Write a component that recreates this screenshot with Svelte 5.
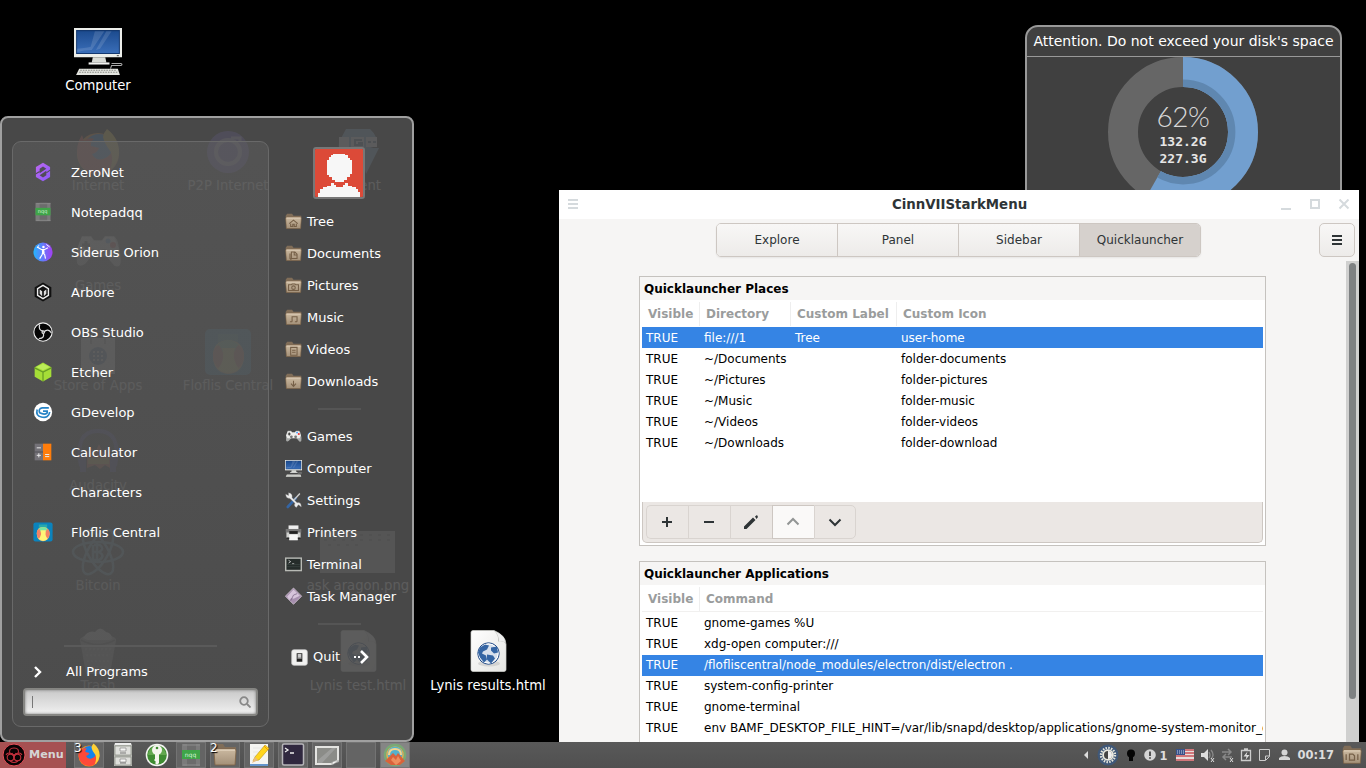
<script>
  const art = {
    computer: `<path d="M2 2h46v28H2z" fill="#eceeea"/><path d="M4 4h42v23H4z" fill="#13386f"/><path d="M5 5h40v21H5z" fill="url(#screen)"/><path d="M22 5h9L19 23q-7 0-14 2v-3q10-1 13-2zM33 5h5L27 22l-4 1z" fill="#fff" opacity=".13"/><path d="M43 28.500h2" stroke="#555"/><path d="M20 30h12l1 5h-14z" fill="#d9dbd6"/><path d="M16 35h20v2H16z" fill="#f4f4f2"/><path d="M38 36h9q2 1 0 2H38l-1 3" fill="none" stroke="#aaa"/><path d="M7 41h37l2 6H4z" fill="#e3e4df"/><path d="M8 42.500h34M7 44.500h37" stroke="#888a85" stroke-dasharray="1.500 1"/>`,
    firefox: `<circle cx="24" cy="26" r="21" fill="#ff8a16"/><circle cx="25" cy="22" r="16" fill="#1583ec"/><path d="M4 30Q1 17 8 7l2 6q4-4 10-2-4 3-3 7l8 2q-2 5-7 6 3 7 11 5 10-3 10-15Q44 23 44 28q-2 17-20 18Q8 45 4 30z" fill="#ff4939"/><path d="M33 1q13 10 12 25-2 12-10 17 5-9 2-19-7-9-8-15 1-5 4-8z" fill="#ffd035"/>`,
    p2p: `<circle cx="24" cy="24" r="21" fill="#6147d8"/><circle cx="24" cy="24" r="12" fill="none" stroke="#c9bfff" stroke-width="4"/><path d="M27 10h9v4" stroke="#c9bfff" stroke-width="3" fill="none"/>`,
    torrent: `<path d="M12 1h24q8 7 7 17l-7 2h9L32 46l-3-13Q2 32 5 14z" fill="#6ca3d8"/><path d="M5 9h10v10H5zM17 9h13v10H17zM32 9h11v10H32z" fill="#eef"/><path d="M28 12h-7v5h7v-2h-4M34 14h3m2 0h3" stroke="#468" stroke-width="2" fill="none"/>`,
    gamepad: `<path d="M8 8h9l3 4h8l3-4h9q4 3 5 12 3 11 1 17-4 4-8-2l-6-7H18l-7 8q-6 4-8-1Q2 28 5 15z" fill="#a8aaa9"/><path d="M8 9h9l3 4h8l3-4h9l5 12-4 8H7l-4-8z" fill="#eeeeec"/><path d="M12 13v8M8 17h8" stroke="#333" stroke-width="3"/><circle cx="18" cy="25" r="4" fill="#777"/><circle cx="30" cy="25" r="4" fill="#777"/><circle cx="34" cy="13" r="2.500" fill="#39f"/><circle cx="39" cy="17" r="3" fill="#e33"/>`,
    store: `<path d="M7 10h34v36H7z" fill="#eee"/><path d="M17 16V7q7-8 14 0v9" fill="none" stroke="#888" stroke-width="2"/><circle cx="24" cy="28" r="9" fill="#3769a8"/><path d="M19 24h12M19 28h12M19 32h12" stroke="#fff" stroke-width="2" stroke-dasharray="2 2"/>`,
    floflis: `<rect x="1" y="1" width="46" height="46" rx="5" fill="#0b83bd"/><path d="M14 6h20v9H14z" fill="#28a8ad"/><path d="M9 28Q9 13 24 12q16 1 16 17-1 16-16 17Q9 44 9 28z" fill="#f8c56c"/><path d="M13 17q11-10 22 0l-5 7H18z" fill="#79e5a1"/><path d="M9 28q0-9 6-11 9 12 0 23-6-4-6-12zM40 28q0-9-6-11-9 12 0 23 6-4 6-12z" fill="#f28266"/><path d="M18 20h13q-4 10 4 21-10 8-21 0 8-10 4-21z" fill="#fff477"/>`,
    audacity: `<path d="M7 38Q0 3 24 3t17 35" fill="none" stroke="#2929aa" stroke-width="4"/><path d="M9 26v18M39 26v18" stroke="#2929aa" stroke-width="6"/><path d="M13 24l4-5 4 6 4-9 4 9 3-5 4 6v14l-5-3-5 4-5-4-8 3z" fill="#ff5526"/><path d="M14 30h21v6H14z" fill="#ffcc26"/>`,
    bitcoin: `<g fill="none" stroke="#54a6cf" stroke-width="2.500"><ellipse cx="24" cy="24" rx="25" ry="10"/><ellipse cx="24" cy="24" rx="25" ry="10" transform="rotate(60 24 24)"/><ellipse cx="24" cy="24" rx="25" ry="10" transform="rotate(120 24 24)"/><path d="M20 17h6q5 4-1 7 7 4 0 8h-6V17m4-3v20M20 24h5"/></g>`,
    trash: `<ellipse cx="24" cy="12" rx="18" ry="6" fill="#aaa"/><path d="M9 10q5-8 12-6 5-7 11 0 6 1 6 7l-14 5z" fill="#eee"/><path d="M6 12h36l-6 34H12z" fill="#999"/><path d="M7 12q17 9 34 0" stroke="#444" stroke-width="1.500" fill="none"/><path d="M11 21h26M12 27h24M13 33h22M14 39h20" stroke="#ddd" stroke-dasharray="2 2"/>`,
    html: `<g transform="translate(0 1.500)"><path d="M7 3q0-2 2-2h21q12 5 12 14v25q0 2-2 2H9q-2 0-2-2z" fill="url(#paper)" stroke="#d1d2ce" stroke-width=".7"/><path d="M30 1q5 5 4 11 6-1 8 3Q39 5 30 1z" fill="#babdb7"/><path d="M31 2q10 4 10 11-3-2-6-1 0-6-4-10z" fill="#eee"/><ellipse cx="25" cy="34" rx="11" ry="3" fill="#bbb" opacity=".5"/><circle cx="24.500" cy="24" r="10.700" fill="#d7e0ec" stroke="#204a87"/><circle cx="24.500" cy="24" r="9.600" fill="none" stroke="#fff"/><path d="M16 18l5-3 4 1-2 4-4 2-1 2 4 2 1 4-3 3-4-5-2-5zM23 25l6 1 2 3-4 5-4-4zM27 18l6-1 1 6-4 1-3-3z" fill="#3465a4"/></g>`,
    photo: `<path d="M-14 3h75v42h-75z" fill="#a8a8a8"/><path d="M-10 7h67M-10 12h67M-6 17h30" stroke="#777" stroke-width="2" stroke-dasharray="3 6"/>`,
    zeronet: `<path d="M12 1l8.500 5v12L12 23l-8.500-5V6z" fill="url(#zero)"/><path d="M12 5.500l4 2.500-8 5.500V8zM12 18.500L8 16l8-5.500V16z" fill="#514c58"/><path d="M3 14.500l5-3M16 13l5-3.500" stroke="#514c58" stroke-width="1.300"/>`,
    npp: `<path d="M3 1h18v22H3z" fill="#7b7b7b"/><path d="M8 1h9v22H8z" fill="#6c6c6c"/><path d="M4 2h17M4 22h17" stroke="#8c8c8c"/><path d="M3 7h18v9H3z" fill="#3fa548"/><text x="11.500" y="13.500" text-anchor="middle" font-family="DejaVu Sans" font-size="6" fill="#d8f4da">nqq</text>`,
    siderus: `<circle cx="12" cy="12" r="11.500" fill="url(#orion)"/><g fill="none" stroke="#fff"><path d="M5 6l5 3h4l4-2M8 20l3-5 .5-2 2.500 2 1 5" stroke-width="1.400"/><path d="M12 9l.5 5" stroke-width="3"/><path d="M16 3l4 3M7 4L5 7" stroke-width="1.200"/></g><circle cx="12.500" cy="6" r="1.500" fill="#fff"/>`,
    arbore: `<path d="M12 .500l10 5.700v11.500l-10 5.800-10-5.800V6.200z" fill="#111"/><path d="M12 4l6.500 4v8L12 20l-6.500-4V8z" fill="none" stroke="#eee" stroke-width="1.700"/><path d="M8 9v5l3 3v-6zM16 9v5l-3 3v-6z" fill="#ddd"/>`,
    obs: `<circle cx="12" cy="12" r="11" fill="#050505" stroke="#eee" stroke-width="1.300"/><g fill="none" stroke="#ddd" stroke-width="1.500"><path d="M12 11Q6 10 8 3M13 12q5-5 9 1M12 13q3 6-5 7"/><circle cx="12.300" cy="12" r="1.500"/></g>`,
    etcher: `<path d="M12 .500l10 5.700v11.500l-10 5.800-10-5.800V6.200z" fill="#a5de37"/><path d="M2 7l10 5 10-5M12 12v11" fill="none" stroke="#669c25" stroke-width="1.500"/><path d="M12 2l8 4-8 4-8-4z" fill="#bced59"/>`,
    gdevelop: `<circle cx="12" cy="12" r="11" fill="#fff"/><path d="M19 7h-8q-5 1-3 6 6 3 9 0v-2h-5M5 9q-2 8 5 9 9 2 10-6" fill="none" stroke="#2683c5" stroke-width="2"/>`,
    calculator: `<path d="M2 2h10v20H2z" fill="#747278"/><path d="M12 2h10v20H12z" fill="#ff7d0b"/><path d="M4.500 7h5M4.500 16h5M7 13.500v5M14.500 15h5M14.500 17.500h5" stroke="#e9e9e9" stroke-width="1.200"/><path d="M2 12h10" stroke="#4c4a50"/>`,
    tools: `<path d="M15 9L4 21" stroke="#3465a4" stroke-width="4" stroke-linecap="round"/><path d="M21 2L12 12" stroke="#ccc" stroke-width="2"/><path d="M5 1q6 1 5 7l7 7q6-1 6 6l-4-3-3 4q-4-2-2-6L7 9Q1 9 1 3l4 2z" fill="#eee" stroke="#888" stroke-width=".5"/>`,
    printer: `<path d="M5 2h14v8H5z" fill="#eee"/><path d="M2 8h20v12H2z" fill="#d0d1cf"/><path d="M1 7h22v5H1z" fill="#777"/><path d="M6 10h12v4H6z" fill="#222"/><path d="M6 15h12v7H6z" fill="#f7f7f7"/><path d="M2 20h20" stroke="#222" stroke-width="2"/><path d="M6 17h12v6H6z" fill="#f7f7f7"/>`,
    terminal: `<path d="M0 2h24v20H0z" fill="#b8bab5"/><path d="M2 4h20v15.500H2z" fill="#252c2a"/><path d="M5 6l3 2-3 2m5 1h3" fill="none" stroke="#eee"/><path d="M3 12h18M3 15h18" stroke="#3b4542"/><path d="M0 22h24" stroke="#555"/>`,
    task: `<path d="M12 0l11.500 11.500L12 23 .5 11.500z" fill="#a68fae" stroke="#ddd0df" stroke-width="1"/><path d="M3 12l9-10 9 9-9 4-3-1-3 3z" fill="#d6c4db"/><path d="M8 18l4-8 5-2" stroke="#765f7f" fill="none"/>`,
    quit: `<rect x="1" y="1" width="22" height="22" rx="3" fill="#f1f1f0" stroke="#ccc"/><path d="M8 6h8v12H8z" fill="#222"/><path d="M9 7h6v7H9z" fill="#888"/><path d="M10 7h4v5h-4z" fill="#ccc"/>`,
    cabinet: `<path d="M4 0h16l1 3H3z" fill="#eee"/><path d="M3 2h18v21H3z" fill="#b6b8b2"/><path d="M4 3h16v9H4zM4 14h16v8H4z" fill="#dfe0dc" stroke="#888a83" stroke-width=".7"/><path d="M9 5h6v3H9zM9 16h6v3H9z" fill="#f7f7f6" stroke="#777" stroke-width=".6"/><path d="M9 10h6M9 20h6" stroke="#777"/>`,
    key: `<circle cx="12" cy="12" r="11.300" fill="#f5f5f3"/><circle cx="12" cy="12" r="9.800" fill="#3f8c32"/><path d="M3 12a9 9 0 0 1 18 0z" fill="#63a84f"/><circle cx="12" cy="7" r="5" fill="#f5f5ee"/><circle cx="12" cy="5" r="1.300" fill="#3f8c32"/><path d="M10 10h4v10l-2 2-2-2 1-1-2-2 1-1z" fill="#f5f5ee"/>`,
    folder: `<path d="M1 4l2-3h7l2 3h11v4H1z" fill="#806d58"/><path d="M2 6h20q1 0 1 2l-1 14H2L1 8z" fill="url(#tan)" stroke="#806344" stroke-width=".8"/><path d="M2 7h20" stroke="#efe1cd"/>`,
    notes: `<path d="M3 1h18v21H3z" fill="#f5f5f2"/><path d="M3 21h18v2H3z" fill="#6495cc"/><path d="M6 5h10M6 9h10M6 13h8" stroke="#ddd" stroke-width=".6"/><path d="M6 18l2-4L18 2l4 3.500L12 17z" fill="#ffd51d" stroke="#bd960b" stroke-width=".6"/><path d="M8 14l3 3-6 3z" fill="#e7bc80"/><path d="M17 3l4 4" stroke="#f39b00"/>`,
    console: `<rect x="1.500" y="1" width="21" height="21" rx="1.500" fill="#30283f" stroke="#b6b5b9" stroke-width="1.500"/><path d="M4 5l3 2-3 2m5 1h4" stroke="#eee" fill="none" stroke-width="1.300"/>`,
    viewer: `<path d="M0 3h24v16q-6 1-7 3H0z" fill="#e4e4e1"/><path d="M2 5h20v12l-6 3H2z" fill="#8b8c88"/><path d="M3 17L17 5h4L7 20H3z" fill="#aaa" opacity=".6"/><path d="M17 22q-1-5 7-4z" fill="#f1f1ef" stroke="#888" stroke-width=".6"/>`,
    ember: `<circle cx="12" cy="12" r="10" fill="#e9ad4e" stroke="#79a975" stroke-width="2.500"/><circle cx="12" cy="11" r="7.500" fill="#54b2cc"/><path d="M6 12q0-6 6-6t6 6" fill="none" stroke="#f4d48e" stroke-width="2"/><path d="M2 18L10 10l3 3 2-3 7 8-5 4H8z" fill="#d9623b"/><path d="M8 17l2-3 3 3 2-4 3 5-5 4z" fill="#ee8f5e"/>`
  };
  const desktop = [
    ['Computer', 'computer', 0, 0], ['Internet', 'firefox', 0, 1], ['P2P Internet', 'p2p', 1, 1], ['Torrent', 'torrent', 2, 1],
    ['Games', 'gamepad', 0, 2], ['Store of Apps', 'store', 0, 3], ['Floflis Central', 'floflis', 1, 3], ['Audacity', 'audacity', 0, 4],
    ['Bitcoin', 'bitcoin', 0, 5], ['ask aragon.png', 'photo', 2, 5], ['Trash', 'trash', 0, 6], ['Lynis test.html', 'html', 2, 6], ['Lynis results.html', 'html', 3, 6]
  ];
  const apps = [['ZeroNet', 'zeronet'], ['Notepadqq', 'npp'], ['Siderus Orion', 'siderus'], ['Arbore', 'arbore'], ['OBS Studio', 'obs'], ['Etcher', 'etcher'], ['GDevelop', 'gdevelop'], ['Calculator', 'calculator'], ['Characters', ''], ['Floflis Central', 'floflis']];
  const marks = {
    Tree: 'M6 15l6-5 6 5M8 15v4h3v-3h2v3h3v-4', Documents: 'M9 10h5l3 3v6H9zM7 12v7l2 2M13 10v4h4',
    Pictures: 'M5 11h4l1-1h4l1 1h4v8H5zM14.500 15a2.500 2.500 0 1 1-5 0 2.500 2.500 0 1 1 5 0', Music: 'M10 18v-7h7v7M7 18h3M14 18h3',
    Videos: 'M8 9h9v11H8zM10 13h5M10 16h5', Downloads: 'M12 11v7M8.500 15l3.500 4 3.500-4'
  };
  const system = [['Games', 'gamepad', 48], ['Computer', 'computer', 46], ['Settings', 'tools', 24], ['Printers', 'printer', 24], ['Terminal', 'terminal', 24], ['Task Manager', 'task', 24]];
  const tasks = [['firefox', 48, '3', 1], ['cabinet', 24, '', 0], ['key', 24, '', 0], ['npp', 24, '', 1], ['folder', 24, '2', 1], ['notes', 24, '', 1], ['console', 24, '', 1], ['viewer', 24, '', 1], ['', 24, '', 1], ['ember', 24, '', 2]];
  const places = [['file:///1', 'Tree', 'user-home'], ['~/Documents', '', 'folder-documents'], ['~/Pictures', '', 'folder-pictures'], ['~/Music', '', 'folder-music'], ['~/Videos', '', 'folder-videos'], ['~/Downloads', '', 'folder-download']];
  const commands = ['gnome-games %U', 'xdg-open computer:///', '/flofliscentral/node_modules/electron/dist/electron .', 'system-config-printer', 'gnome-terminal', 'env BAMF_DESKTOP_FILE_HINT=/var/lib/snapd/desktop/applications/gnome-system-monitor_gnome-system-monitor.desktop'];
</script>

{#snippet icon(name, size, box = 24)}
  {@const origin = name === 'computer' ? 2 : 0}
  <svg class="icon" width={size} height={size} viewBox="{origin} {origin} {box} {box}">{@html art[name] ?? ''}</svg>
{/snippet}

<svg class="defs" width="0" height="0">
  <defs>
    <linearGradient id="screen" x2="0" y2="1"><stop stop-color="#1c4b8f" /><stop offset="1" stop-color="#3a6eb8" /></linearGradient>
    <linearGradient id="paper" x2="1" y2="1"><stop stop-color="#fff" /><stop offset="1" stop-color="#e5e5e2" /></linearGradient>
    <linearGradient id="orion" x2="1" y2="0"><stop stop-color="#25b5ff" /><stop offset="1" stop-color="#a53ef4" /></linearGradient>
    <linearGradient id="zero" x2="1" y2="1"><stop stop-color="#bd68f0" /><stop offset="1" stop-color="#8a5af8" /></linearGradient>
    <linearGradient id="tan" x2="0" y2="1"><stop stop-color="#cbb9a0" /><stop offset="1" stop-color="#a39078" /></linearGradient>
  </defs>
</svg>

<main class="desktop">
  {#each desktop as [label, name, col, row]}
    <div class="shortcut" style="left:{33 + col * 130}px;top:{28 + row * 100}px">
      {@render icon(name, 48, name === 'computer' ? 46 : 48)}
      <span>{label}</span>
    </div>
  {/each}

  <section class="desklet">
    <header>Attention. Do not exceed your disk's space</header>
    <div class="gauge">
      <svg width="150" height="150" viewBox="0 0 150 150">
        <circle cx="75" cy="75" r="60" fill="none" stroke="#666" stroke-width="30" />
        <g fill="none" transform="rotate(-90 75 75)">
          <circle cx="75" cy="75" r="60" stroke="#729fcf" stroke-width="30" pathLength="100" stroke-dasharray="58.200 100" />
          <circle cx="75" cy="75" r="48.700" stroke="#5f87b0" stroke-width="7.400" pathLength="100" stroke-dasharray="58.200 100" />
        </g>
      </svg>
      <div class="reading"><b>62%</b><span>132.2G</span><span>227.3G</span></div>
    </div>
  </section>

  <section class="window">
    <header class="titlebar">
      <svg width="12" height="12" viewBox="0 0 12 12" stroke="#d5dadd" stroke-width="2"><path d="M1 1h10M1 5h10M1 9h10" /></svg>
      <h1>CinnVIIStarkMenu</h1>
      <div class="controls">
        <svg width="12" height="12" viewBox="0 0 12 12"><path d="M1 10h10" /></svg>
        <svg width="12" height="12" viewBox="0 0 12 12"><path d="M2 1h8v8H2z" /></svg>
        <svg width="12" height="12" viewBox="0 0 12 12"><path d="M1.500 .500l9 9m0-9l-9 9" /></svg>
      </div>
    </header>
    <nav>
      <div class="tabs">
        {#each ['Explore', 'Panel', 'Sidebar', 'Quicklauncher'] as tab, i}
          <button class:active={i === 3}>{tab}</button>
        {/each}
      </div>
      <button class="burger" aria-label="Menu"><svg width="12" height="12" viewBox="0 0 12 12" stroke="#2e3436" stroke-width="2"><path d="M1 2h10M1 6h10M1 10h10" /></svg></button>
    </nav>
    <div class="body">
      <div class="content">
        <section class="group first">
          <h2>Quicklauncher Places</h2>
          <div class="table">
            <div class="head places"><span>Visible</span><span>Directory</span><span>Custom Label</span><span>Custom Icon</span></div>
            {#each places as [dir, label, ico], i}
              <div class="row places" class:selected={i === 0}><span>TRUE</span><span>{dir}</span><span>{label}</span><span>{ico}</span></div>
            {/each}
          </div>
          <div class="toolbar">
            <button aria-label="Add"><svg width="14" height="14" viewBox="0 0 14 14"><path d="M7 2v10M2 7h10" /></svg></button>
            <button aria-label="Remove"><svg width="14" height="14" viewBox="0 0 14 14"><path d="M2 7h10" /></svg></button>
            <button aria-label="Edit"><svg width="14" height="14" viewBox="0 0 14 14"><path d="M0 14v-2.500L9 2.500l2.500 2.500L2.500 14zM11 1.500l2-1.500 1 2-1.500 2z" fill="#2e3436" stroke="none" /></svg></button>
            <button class="light" aria-label="Up"><svg width="14" height="14" viewBox="0 0 14 14"><path d="M1.500 9.500L7 4l5.500 5.500" /></svg></button>
            <button aria-label="Down"><svg width="14" height="14" viewBox="0 0 14 14"><path d="M1.500 4.500L7 10l5.500-5.500" /></svg></button>
          </div>
        </section>
        <section class="group">
          <h2>Quicklauncher Applications</h2>
          <div class="table">
            <div class="head commands"><span>Visible</span><span>Command</span></div>
            {#each commands as command, i}
              <div class="row commands" class:selected={i === 2}><span>TRUE</span><span>{command}</span></div>
            {/each}
          </div>
        </section>
      </div>
      <div class="scroll"><i></i></div>
    </div>
  </section>

  <section class="menu">
    <div class="programs">
      <ul>
        {#each apps as [label, name]}
          <li><span class="slot">{@render icon(name, 20, name === 'floflis' ? 48 : 24)}</span>{label}</li>
        {/each}
      </ul>
      <hr />
      <div class="all"><svg width="10" height="14" viewBox="0 0 10 14"><path d="M2 2l5 5-5 5" fill="none" stroke="#fff" stroke-width="2.400" /></svg><span>All Programs</span></div>
      <div class="search"><i></i><svg width="12" height="12" viewBox="0 0 12 12" fill="none" stroke="#888" stroke-width="1.800"><circle cx="5" cy="5" r="3.800" /><path d="M8 8l3.500 3.500" /></svg></div>
    </div>
    <div class="side">
      <svg class="avatar" width="48" height="48" viewBox="0 0 48 48" shape-rendering="crispEdges"><path fill="#dc4a38" d="M0 0h48v48H0z" /><path fill="#f7f7f7" d="M18 5h12v1h3v3h2v2h2v14h-2v3h-3v3h-3v2H20v-2h-3v-3h-3v-2h-2V11h2V8h2V6h2zM16 34h3v2h2v2h7v-2h2v-2h3v3h4v1h4v2h2v3h2v5H3v-4h2v-4h3v-2h4v-1h4z" /></svg>
      <ul class="folders">
        {#each Object.entries(marks) as [label, d]}
          <li><svg class="icon" width="17" height="17" viewBox="0 0 24 24"><g>{@html art.folder}</g><path {d} fill="none" stroke="#755f47" stroke-width="1.500" /></svg>{label}</li>
        {/each}
      </ul>
      <hr />
      <ul>
        {#each system as [label, name, box]}
          <li>{@render icon(name, 17, box)}{label}</li>
        {/each}
      </ul>
      <hr />
      <div class="quit">{@render icon('quit', 17)}<span>Quit</span><svg width="18" height="16" viewBox="0 0 18 16" fill="none" stroke="#fff"><path d="M2 8h2m2 0h2" stroke-width="2" /><path d="M9 2l6 6-6 6" stroke-width="2.600" /></svg></div>
    </div>
  </section>

  <footer>
    <div class="start">
      <svg width="24" height="24" viewBox="0 0 24 24"><circle cx="12" cy="12" r="11" fill="#080304" stroke="#e8505a" /><g fill="none" stroke="#c0303c" stroke-width="1.100"><path d="M8 11q-2-6 4-6t4 6" /><circle cx="8.500" cy="14.500" r="3.300" /><circle cx="15.500" cy="14.500" r="3.300" /><path d="M4 12q2-4 8 0 6-4 8 0M8 18q4 3 8 0M10 10l2 4 2-4" /></g></svg>
      <b>Menu</b>
    </div>
    <div class="tasks">
      {#each tasks as [name, box, count, state]}
        <div class="task" class:open={state > 0} class:lit={state === 2}>{#if name}{@render icon(name, 24, box)}{/if}{#if count}<span>{count}</span>{/if}</div>
      {/each}
    </div>
    <div class="tray">
      <svg width="192" height="24" viewBox="0 0 192 24">
        <path d="M4 8v8l-4-4z" fill="#ddd" />
        <circle cx="24" cy="12" r="10.500" fill="#405878" /><circle cx="24" cy="12" r="7" fill="none" stroke="#e5e5dc" stroke-width="2.400" stroke-dasharray="1.500 1.250" /><circle cx="24" cy="12" r="5.800" fill="#e8e8df" /><circle cx="24" cy="12" r="4" fill="#444" /><path d="M24 8a4 4 0 0 1 0 8z" fill="#eee" />
        <circle cx="47" cy="10.500" r="4" fill="#050505" /><path d="M45 13h4v5h-4z" fill="#050505" />
        <circle cx="66" cy="12" r="5.800" fill="#d5d5d5" /><path d="M66 8.500v4.500m0 1.200v1.600" stroke="#444" stroke-width="1.800" />
        <text x="75.500" y="16.500" fill="#ddd" font-family="DejaVu Sans" font-weight="bold" font-size="11.500">1</text>
        <path d="M92 6h18v12H92z" fill="#e7dedd" /><path d="M92 7h18M92 10h18M92 13h18M92 17h18" stroke="#c9545a" stroke-width="1.500" /><path d="M92 6h9v6h-9z" fill="#37528b" /><path d="M93 8h8m-8 2h8" stroke="#ccd3e2" stroke-dasharray="1 1" />
        <path d="M117 10h3l4-4v12l-4-4h-3z" fill="#ddd" /><path d="M125 9q2 3 0 6M127 7q4 5 0 9" fill="none" stroke="#8a8a8a" stroke-width="1.300" /><path d="M127 15l3 4m0-4l-3 4" stroke="#ddd" />
        <path d="M138 9h8m-2-3l3 3-3 3M148 14h-9m3-3l-3 3 3 3" fill="none" stroke="#888" stroke-width="1.500" /><path d="M146 15l3 4m0-4l-3 4" stroke="#ddd" />
        <path d="M157.500 7.500h9v10h-9zM160 6h4" fill="none" stroke="#ccc" stroke-width="1.300" /><path d="M163.500 8.500l-4 5h3l-1 3.500 4-5h-3z" fill="#ddd" />
        <path d="M175.500 6.500h10v7l-4 4h-6zM181.500 17v-4h4" fill="none" stroke="#ccc" />
      </svg>
      <svg class="user" width="11" height="12" viewBox="0 0 11 12" fill="#d5d5d5"><circle cx="5.500" cy="3.500" r="3" /><path d="M0 11V9q2-2 5.500-2T11 9v2z" /></svg>
      <b>00:17</b>
      <svg class="icon" width="20" height="20" viewBox="0 0 24 24"><g>{@html art.folder}</g><path d="M5 11v7M19 11v7M9 11h4l2 2v5H9z" fill="none" stroke="#755f47" stroke-width="1.500" /></svg>
    </div>
  </footer>
</main>

<style>
  :global(body) { margin: 0; background: #000; overflow: hidden; }
  .defs { position: absolute; }
  .desktop { position: relative; width: 1366px; height: 768px; overflow: hidden; background: #000; font: 13px/20px 'DejaVu Sans', sans-serif; color: #fff; }
  ul, h1, h2 { margin: 0; padding: 0; list-style: none; }
  button { padding: 0; font: inherit; }
  svg { display: block; flex: none; }
  .icon { overflow: visible; }
  .shortcut { position: absolute; width: 130px; display: flex; flex-direction: column; align-items: center; font-size: 13.200px; white-space: nowrap; }

  .desklet { position: absolute; left: 1025px; top: 25px; width: 317px; height: 190px; box-sizing: border-box; border: 2px solid #999; border-radius: 13px; background: #404040; overflow: hidden; }
  .desklet header { height: 29px; line-height: 29px; border-bottom: 1px solid #999; text-align: center; font-size: 14px; white-space: nowrap; }
  .gauge { display: grid; justify-items: center; padding-right: 1px; }
  .gauge > * { grid-area: 1 / 1; }
  .reading { display: flex; flex-direction: column; align-items: center; padding-top: 44px; font: bold 13px/17px 'DejaVu Sans Mono', monospace; color: #e6e6e6; }
  .reading b { font: 300 28px/31px Lato, sans-serif; letter-spacing: -.5px; margin-bottom: 1px; color: #d8d8d8; }

  .window { position: absolute; left: 559px; top: 190px; width: 800px; height: 552px; display: flex; flex-direction: column; background: #f6f5f4; color: #000; font-size: 12px; overflow: hidden; }
  .titlebar { height: 29px; flex: none; background: #fff; display: grid; grid-template-columns: 72px 1fr 71px; align-items: center; padding: 0 8px; }
  h1 { font-size: 13.330px; line-height: 28px; text-align: center; color: #2e3436; }
  .controls { display: flex; gap: 17px; fill: none; stroke: #d5dadd; stroke-width: 2; }
  nav { flex: none; display: grid; grid-template-columns: 157px 485px 1fr; padding: 4px 4px 0 0; height: 38px; }
  .tabs { grid-column: 2; display: flex; height: 34px; box-sizing: border-box; border: 1px solid #cdc7c2; border-radius: 5px; overflow: hidden; box-shadow: 0 1px 2px #0001; }
  .tabs button { flex: 1; border: 0; border-left: 1px solid #cdc7c2; padding-bottom: 1px; background: linear-gradient(#f8f7f6, #edebe9); color: #2e3436; }
  .tabs button:first-child { border-left: 0; }
  .tabs .active { background: #d6d1cd; }
  .burger { justify-self: end; width: 36px; height: 34px; display: grid; place-items: center; border: 1px solid #cdc7c2; border-radius: 5px; background: linear-gradient(#f8f7f6, #edebe9); }
  .body { flex: 1; min-height: 0; display: flex; }
  .content { flex: 1; padding: 15px 80px 0; min-width: 0; display: flex; flex-direction: column; gap: 15px; }
  .scroll { width: 13px; background: #d0d0cf; box-sizing: border-box; padding: 2px 3px; }
  .scroll i { display: block; height: 436px; border-radius: 4px; background: #7e8182; }
  .group { flex: none; width: 627px; height: 270px; box-sizing: border-box; border: 1px solid #c5c2be; background: #fff; padding: 0 2px 2px; display: flex; flex-direction: column; }
  h2 { margin: 0 -2px; padding-left: 4px; height: 23px; line-height: 25px; background: #f6f5f4; font-size: 12px; }
  .table { flex: 1; min-height: 0; }
  .places { display: grid; grid-template-columns: 58px 91px 106px 1fr; }
  .commands { display: grid; grid-template-columns: 58px 1fr; }
  .head { height: 27px; color: #9a9c9c; font-weight: bold; box-sizing: border-box; border-bottom: 1px solid #f1f0ef; }
  .first .head { border-bottom: 0; }
  .head span { padding-left: 6px; margin-top: 2px; height: 24px; line-height: 25px; border-right: 1px solid #eee; box-sizing: border-box; white-space: nowrap; }
  .head span:last-child { border: 0; }
  .row { height: 21px; line-height: 21px; white-space: nowrap; }
  .first .row { line-height: 23px; }
  .row span { padding-left: 4px; height: 21px; overflow: hidden; }
  .commands.head + .row { margin-top: 1px; }
  .selected { background: #3584e4; color: #fff; }
  .toolbar { height: 37px; display: flex; background: #ebe7e4; border: solid #cdc7c2; border-width: 0 1px 1px; border-radius: 0 0 5px 5px; padding: 3px 3px 0; }
  .toolbar button { width: 42px; height: 34px; display: grid; place-items: center; background: none; border: 1px solid #d9d4d0; border-right-width: 0; padding-right: 1px; }
  .toolbar button:first-child { border-radius: 5px 0 0 5px; }
  .toolbar button:last-child { border-radius: 0 5px 5px 0; border-right-width: 1px; }
  .toolbar svg { fill: none; stroke: #2e3436; stroke-width: 2; }
  .toolbar .light { background: #faf9f8; border-color: #cdc7c2; }
  .toolbar .light svg { stroke: #929595; }

  .menu { position: absolute; left: 0; top: 116px; width: 414px; height: 626px; box-sizing: border-box; display: flex; background: #4e4e4eeb; border: 2px solid #a0a0a0; border-radius: 8px; padding: 23px 0 13px 10px; }
  .programs { width: 257px; box-sizing: border-box; border: 1px solid #696969; border-radius: 9px; background: linear-gradient(#64646466, #52525266); padding: 11px 10px 10px; display: flex; flex-direction: column; }
  .programs li { height: 40px; display: flex; align-items: center; }
  .slot { width: 20px; margin: 0 18px 2px 10px; }
  .programs hr { width: 153px; height: 2px; margin: 92px 41px 0; border: 0; background: #5a5a5a; }
  .all { display: flex; align-items: center; margin-top: 15px; height: 20px; padding-left: 10px; }
  .all span { margin-left: 23px; }
  .search { margin-top: 6px; height: 28px; box-sizing: border-box; border: 2px solid #858582; border-radius: 4px; background: linear-gradient(#c9c9c9, #f0f0f0); box-shadow: inset 0 0 3px #777; display: flex; align-items: center; justify-content: space-between; padding: 0 5px 0 7px; }
  .search i { width: 1px; height: 12px; background: #777; }
  .side { flex: 1; padding: 6px 0 0 14px; display: flex; flex-direction: column; }
  .avatar { border: 2px solid #777; border-radius: 3px; margin-left: 30px; }
  .side li { height: 32px; display: flex; align-items: center; gap: 5px; padding-left: 2px; }
  .side li .icon { margin-bottom: 2px; }
  .folders { margin-top: 7px; }
  .side hr { width: 43px; height: 2px; margin: 10px 0 11px 35px; border: 0; background: #555; flex: none; }
  .quit { display: flex; align-items: center; margin: 11px 0 0 8px; }
  .quit span { margin: 0 12px 0 5px; }

  footer { position: absolute; left: 0; top: 742px; width: 1366px; height: 26px; display: flex; align-items: center; background: linear-gradient(#595959, #505050); }
  .start { width: 66px; height: 26px; box-sizing: border-box; background: #a65152; display: flex; align-items: center; gap: 3px; padding-left: 2px; color: #d5d5d5; font-size: 11.200px; }
  .tasks { display: flex; gap: 4px; margin-left: 8px; }
  .task { position: relative; width: 30px; height: 26px; display: grid; place-items: center; box-sizing: border-box; }
  .open { border: 1px solid #737373; background: #646464; }
  .lit { background: #858585; }
  .task span { position: absolute; left: -1px; top: -5px; font-size: 12px; text-shadow: 1px 1px 1px #000; }
  .tray { margin-left: auto; display: flex; align-items: center; padding-right: 4px; color: #ddd; font-size: 11.500px; }
  .user { margin-left: 3px; }
  .tray b { margin: 0 8px 0 7px; }
</style>
